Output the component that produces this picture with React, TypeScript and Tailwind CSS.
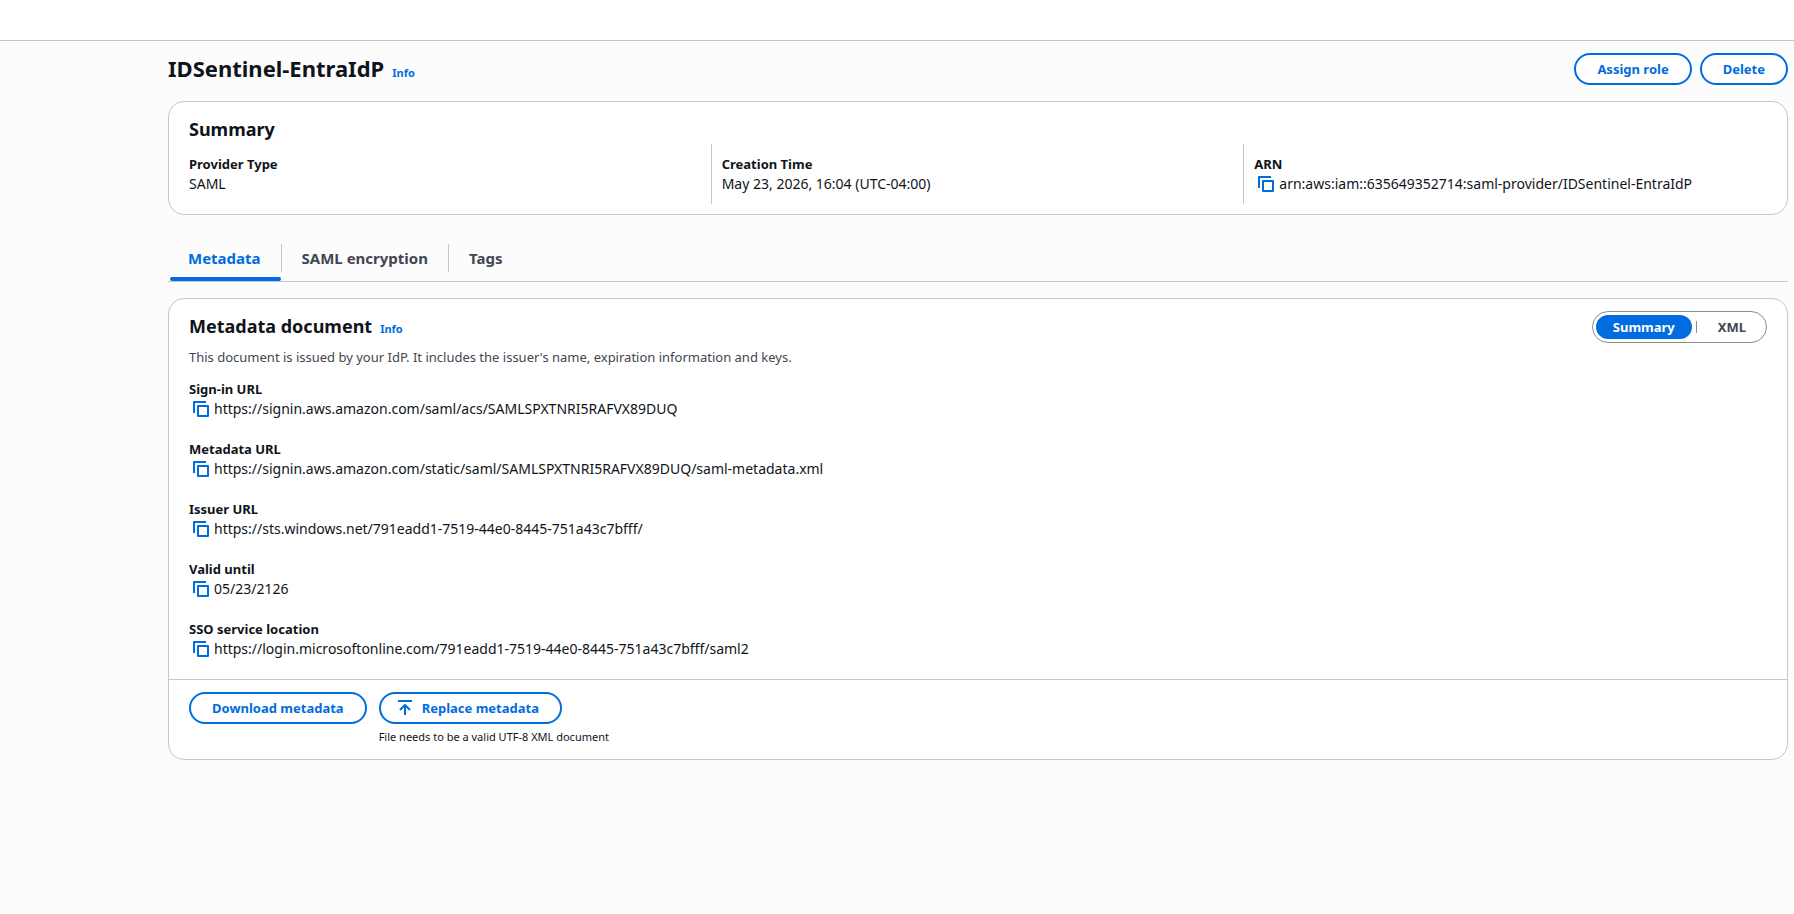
import { useState } from 'react';

const details = [
  { label: 'Sign-in URL', value: 'https://signin.aws.amazon.com/saml/acs/SAMLSPXTNRI5RAFVX89DUQ' },
  { label: 'Metadata URL', value: 'https://signin.aws.amazon.com/static/saml/SAMLSPXTNRI5RAFVX89DUQ/saml-metadata.xml' },
  { label: 'Issuer URL', value: 'https://sts.windows.net/791eadd1-7519-44e0-8445-751a43c7bfff/' },
  { label: 'Valid until', value: '05/23/2126' },
  { label: 'SSO service location', value: 'https://login.microsoftonline.com/791eadd1-7519-44e0-8445-751a43c7bfff/saml2' },
];

const tabs = ['Metadata', 'SAML encryption', 'Tags'];

const labelClass = 'text-[13px] leading-5 font-bold';

const buttonClass =
  'h-8 px-[21px] flex items-center rounded-full border-2 border-[#006ce0] bg-white text-[13px] font-bold text-[#006ce0] whitespace-nowrap hover:bg-[#f0fbff]';

function CopyValue({ value }: { value: string }) {
  const handleCopy = () => {
    navigator.clipboard?.writeText(value);
  };

  return (
    <div className="flex items-center pl-1 gap-[5px]">
      <button type="button" onClick={handleCopy} aria-label="Copy" className="shrink-0 text-[#006ce0]">
        <svg width="16" height="16" viewBox="0 0 16 16" fill="none" stroke="currentColor" strokeWidth="2">
          <path d="M1 12V1h12" strokeLinejoin="round" />
          <path d="M5 5h10v10H5z" strokeLinejoin="round" />
        </svg>
      </button>
      <span>{value}</span>
    </div>
  );
}

function InfoLink() {
  return (
    <a href="#info" className="text-[11px] leading-5 font-bold text-[#006ce0]">
      Info
    </a>
  );
}

export default function App() {
  const [activeTab, setActiveTab] = useState('Metadata');
  const [view, setView] = useState('Summary');

  return (
    <div className="min-h-screen bg-[#fcfcfd] font-['Noto_Sans','Open_Sans',sans-serif] text-sm leading-5 text-[#0f141a]">
      <header className="h-[41px] bg-white border-b border-[#c6c6cd]" />

      <main className="pl-[168px] pr-[6px] pt-3">
        <div className="flex items-start justify-between">
          <div className="flex items-baseline gap-2">
            <h1 className="text-[22px] leading-[30px] font-bold">IDSentinel-EntraIdP</h1>
            <InfoLink />
          </div>
          <div className="flex gap-2">
            <button type="button" className={buttonClass}>Assign role</button>
            <button type="button" className={buttonClass}>Delete</button>
          </div>
        </div>

        <section className="mt-4 px-5 pt-[15px] pb-[10px] rounded-2xl border border-[#c6c6cd] bg-white">
          <h2 className="text-lg leading-6 font-bold">Summary</h2>
          <dl className="mt-[3px] grid grid-cols-3 gap-x-5">
            <div className="py-[10px]">
              <dt className={labelClass}>Provider Type</dt>
              <dd>SAML</dd>
            </div>
            <div className="py-[10px] pl-[10px] -ml-[11px] border-l border-[#c6c6cd]">
              <dt className={labelClass}>Creation Time</dt>
              <dd>May 23, 2026, 16:04 (UTC-04:00)</dd>
            </div>
            <div className="py-[10px] pl-[10px] -ml-[11px] border-l border-[#c6c6cd]">
              <dt className={labelClass}>ARN</dt>
              <dd><CopyValue value="arn:aws:iam::635649352714:saml-provider/IDSentinel-EntraIdP" /></dd>
            </div>
          </dl>
        </section>

        <div role="tablist" className="mt-[21px] flex border-b border-[#c6c6cd]">
          {tabs.map((tab, i) => (
            <button
              key={tab}
              type="button"
              role="tab"
              aria-selected={activeTab === tab}
              onClick={() => setActiveTab(tab)}
              className={`relative pt-2 pb-[9px] text-[15px] leading-7 font-bold ${activeTab === tab ? 'text-[#006ce0]' : 'text-[#424650]'}`}
            >
              <span
                className={`block px-5 ${i < tabs.length - 1 ? 'border-r border-[#c6c6cd]' : ''}`}
              >
                {tab}
              </span>
              {activeTab === tab && (
                <span className="absolute left-[2px] right-px bottom-0 h-1 rounded-sm bg-[#006ce0]" />
              )}
            </button>
          ))}
        </div>

        <section className="mt-4 rounded-2xl border border-[#c6c6cd] bg-white">
          <div className="px-5 pt-3 flex items-start justify-between">
            <div>
              <div className="pt-[3px] flex items-baseline gap-2">
                <h2 className="text-lg leading-6 font-bold">Metadata document</h2>
                <InfoLink />
              </div>
              <p className="mt-2 text-[13px] leading-5 text-[#424650]">
                This document is issued by your IdP. It includes the issuer's name, expiration information and keys.
              </p>
            </div>
            <div className="h-8 p-[3px] flex items-center rounded-full border border-[#8c8c94] text-[13px] font-bold text-[#424650]">
              <button
                type="button"
                onClick={() => setView('Summary')}
                className={`h-6 px-[17px] rounded-full ${view === 'Summary' ? 'bg-[#006ce0] text-white' : ''}`}
              >
                Summary
              </button>
              <span className="mx-1 h-3 w-px bg-[#8c8c94]" />
              <button
                type="button"
                onClick={() => setView('XML')}
                className={`h-6 px-[17px] rounded-full ${view === 'XML' ? 'bg-[#006ce0] text-white' : ''}`}
              >
                XML
              </button>
            </div>
          </div>

          <dl className="px-5 pt-3 pb-5 flex flex-col gap-5">
            {details.map(({ label, value }) => (
              <div key={label}>
                <dt className={labelClass}>{label}</dt>
                <dd><CopyValue value={value} /></dd>
              </div>
            ))}
          </dl>

          <div className="px-5 pt-3 pb-[13px] flex items-start gap-3 border-t border-[#c6c6cd]">
            <button type="button" className={buttonClass}>Download metadata</button>
            <div>
              <button type="button" className={buttonClass}>
                <svg className="-ml-[5px] mr-[9px]" width="16" height="16" viewBox="0 0 16 16" fill="none" stroke="currentColor" strokeWidth="2">
                  <path d="M1 1h14" />
                  <path d="M8 15V5" />
                  <path d="M3 10l5-5 5 5" />
                </svg>
                Replace metadata
              </button>
              <p className="mt-1 text-[11px] leading-[18px]">File needs to be a valid UTF-8 XML document</p>
            </div>
          </div>
        </section>
      </main>
    </div>
  );
}
